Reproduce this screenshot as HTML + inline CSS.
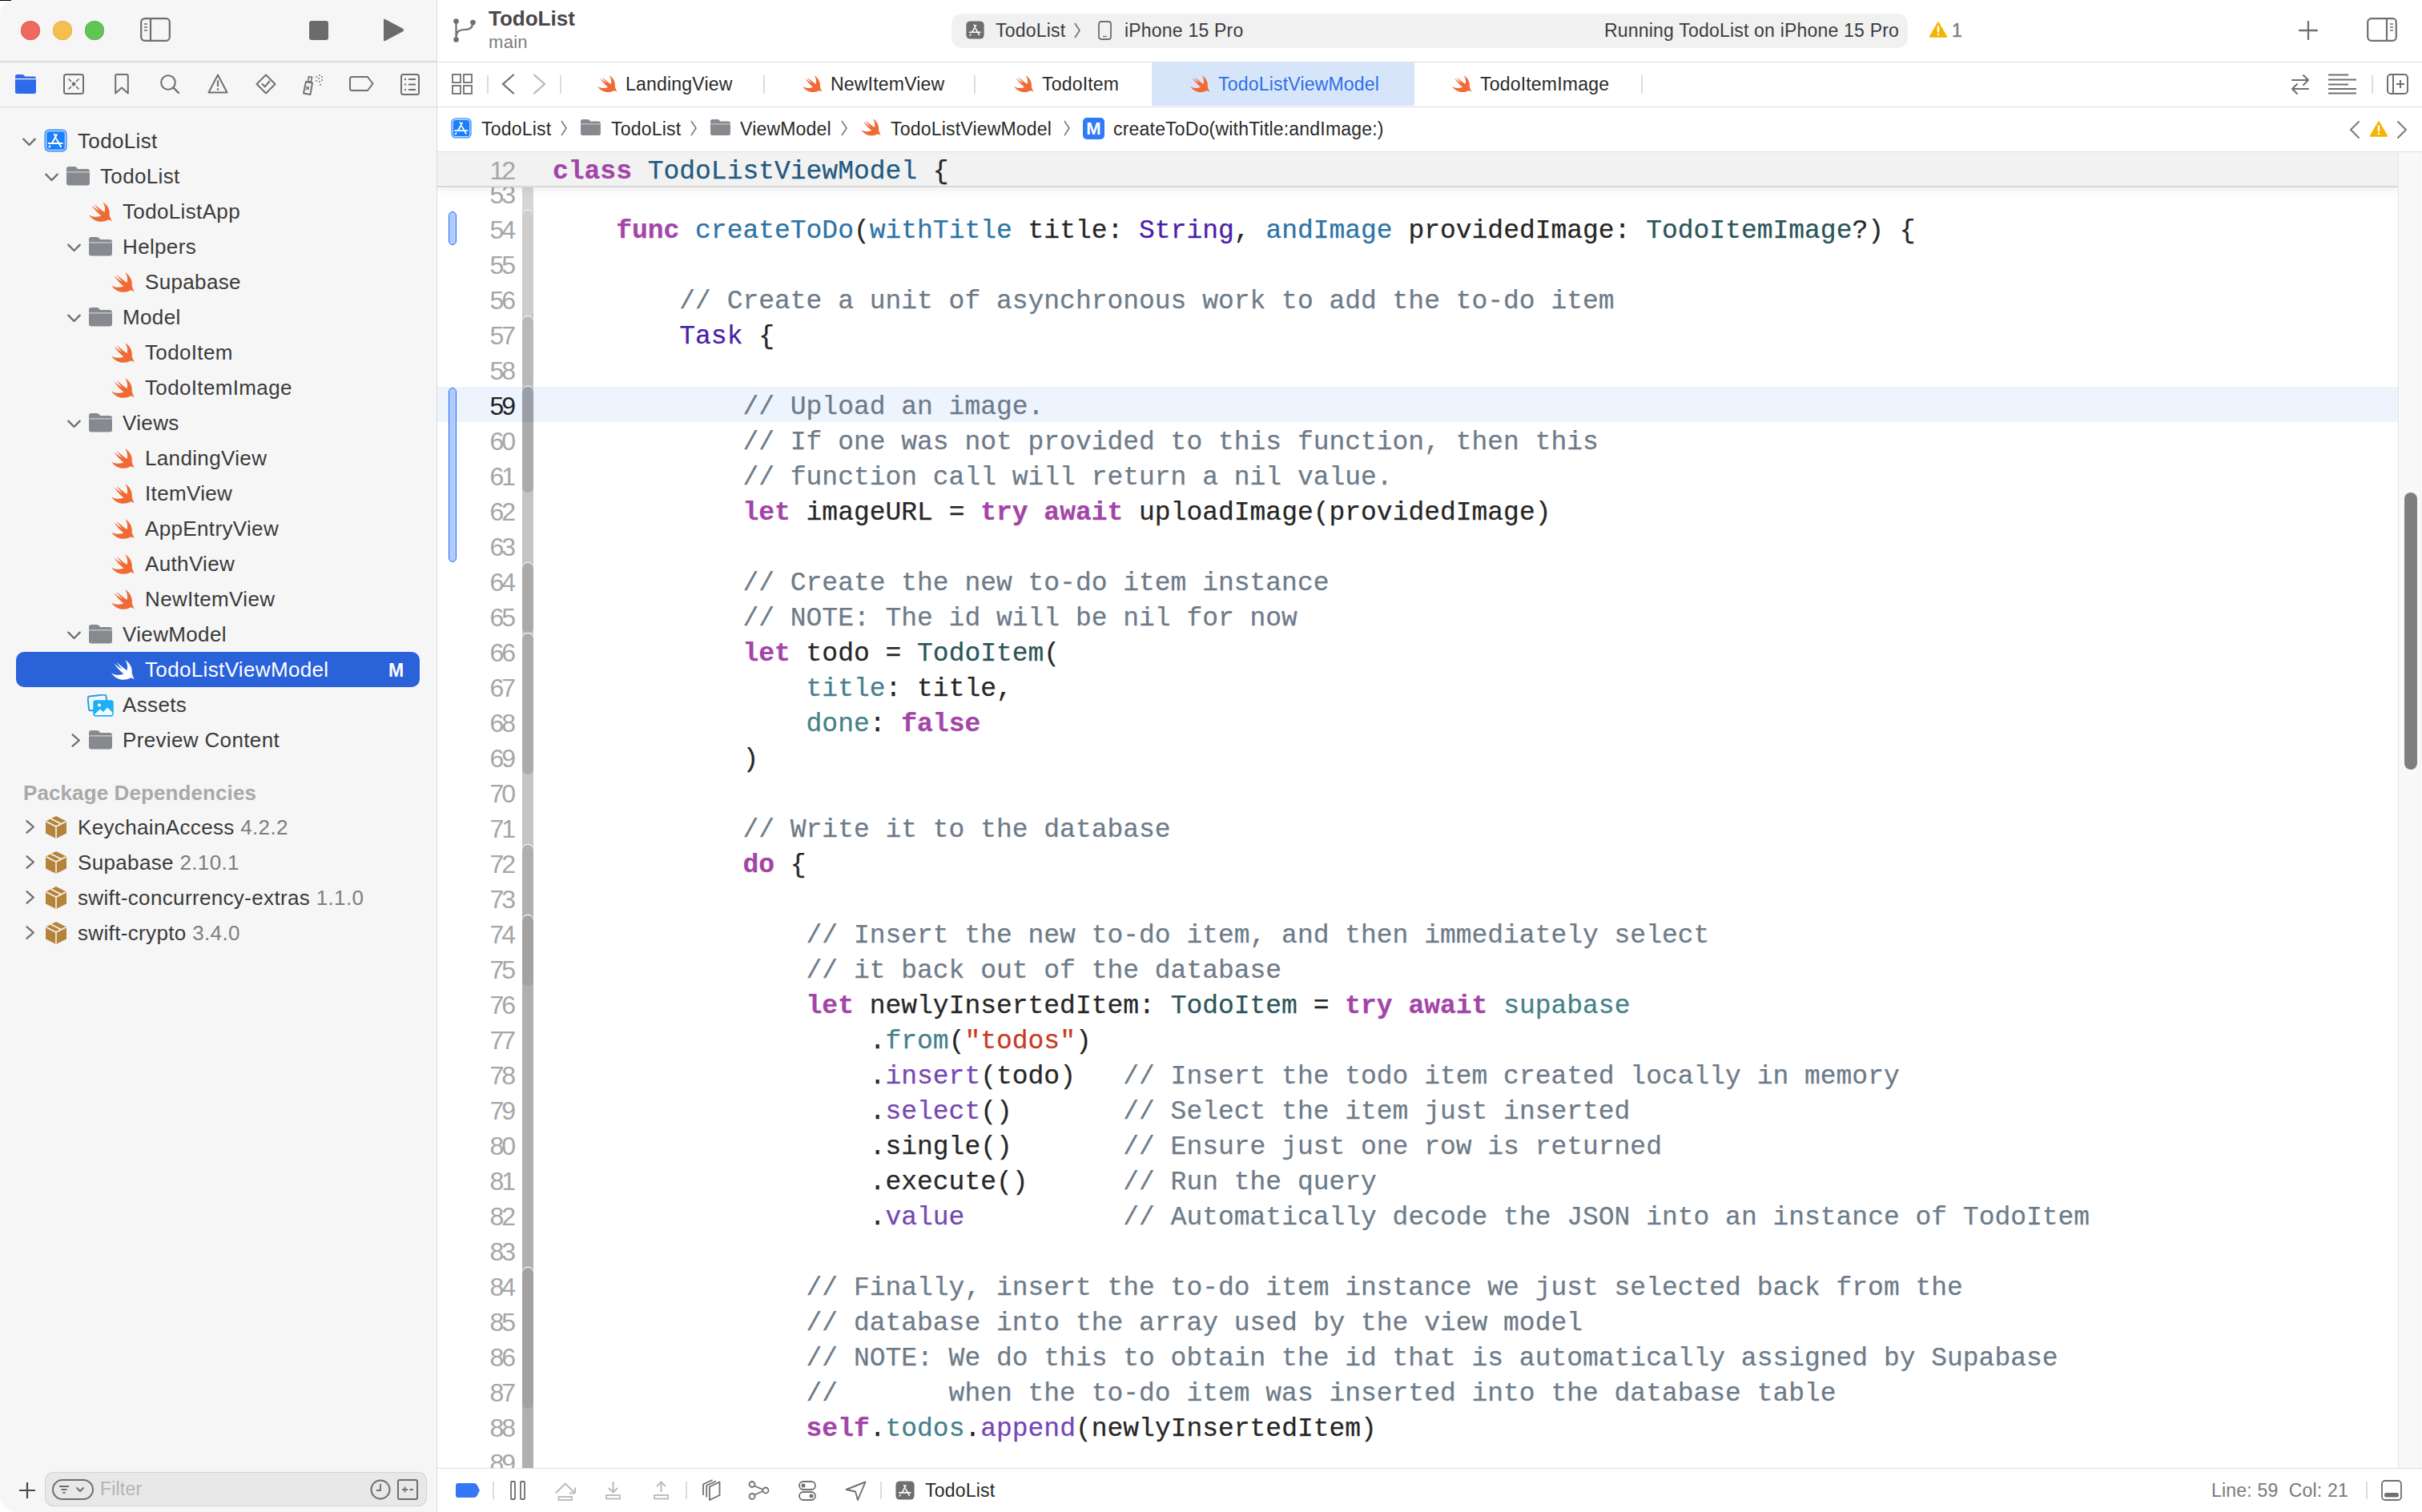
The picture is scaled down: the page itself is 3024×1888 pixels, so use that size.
<!DOCTYPE html><html><head><meta charset="utf-8"><style>html,body{margin:0;padding:0}body{width:3024px;height:1888px;position:relative;overflow:hidden;background:#fff;font-family:"Liberation Sans",sans-serif}.row{position:absolute;left:0;height:44px;width:545px}.t{position:absolute;font-size:26px;line-height:44px;color:#3a3a3a;letter-spacing:0.35px;white-space:pre;top:0}.ln{position:absolute;left:560px;width:81px;text-align:right;font-size:32px;line-height:44px;color:#A6A6A6;letter-spacing:-3px}.cl{position:absolute;left:690px;font-family:"Liberation Mono",monospace;font-size:32.98px;-webkit-text-stroke:0.25px currentColor;line-height:44px;color:#262626;white-space:pre}.k{color:#A345A8;font-weight:bold}.c{color:#6D7B89}.ty{color:#2A5559}.td{color:#22597F}.fd{color:#2D74A6}.sy{color:#4A20A8}.sf{color:#7647B3}.pp{color:#44808A}.st{color:#C73B24}</style></head><body><div style="position:absolute;left:0;top:0;width:545px;height:1888px;background:#F6F6F6;border-right:1px solid #DCDCDC;border-bottom-left-radius:22px;border-top-left-radius:18px;overflow:hidden"><div style="position:absolute;left:26px;top:26px;width:24px;height:24px;border-radius:50%;background:#EC6A5E;box-shadow:inset 0 0 0 0.5px #D0564B"></div><div style="position:absolute;left:66px;top:26px;width:24px;height:24px;border-radius:50%;background:#F4BF4F;box-shadow:inset 0 0 0 0.5px #D6A243"></div><div style="position:absolute;left:106px;top:26px;width:24px;height:24px;border-radius:50%;background:#61C554;box-shadow:inset 0 0 0 0.5px #52A842"></div><svg style="position:absolute;left:175px;top:22px" width="38" height="30" viewBox="0 0 38 30"><rect x="1.2" y="1.2" width="35.6" height="27.6" rx="4.5" fill="none" stroke="#6E6E6E" stroke-width="2.2"/><line x1="13" y1="1.5" x2="13" y2="28.5" stroke="#6E6E6E" stroke-width="2.2"/><path d="M5,8 H9 M5,12 H9 M5,16 H9" stroke="#6E6E6E" stroke-width="1.6"/></svg><div style="position:absolute;left:386px;top:26px;width:24px;height:24px;border-radius:3px;background:#6B6B6B"></div><svg style="position:absolute;left:478px;top:23px" width="27" height="29" viewBox="0 0 27 29"><path d="M1,2 Q1,0 3,1 L25.5,13 Q27,14.5 25.5,16 L3,28 Q1,29 1,27 Z" fill="#6B6B6B"/></svg><div style="position:absolute;left:0;top:76px;width:545px;height:1.5px;background:#DADADA"></div><div style="position:absolute;left:0;top:132.5px;width:545px;height:1.5px;background:#DADADA"></div><svg style="position:absolute;left:19px;top:93px" width="26" height="24" viewBox="0 0 26 24"><path fill="#2F6BE8" d="M2.5,0 H9 Q10.5,0 11.5,1.5 L12,2.5 H23.5 Q26,2.5 26,5 V21.5 Q26,24 23.5,24 H2.5 Q0,24 0,21.5 V2.5 Q0,0 2.5,0 Z"/><rect x="0" y="5" width="26" height="1.2" fill="#F6F6F6"/></svg><svg style="position:absolute;left:79px;top:92px" width="26" height="26" viewBox="0 0 26 26"><rect x="1" y="1" width="24" height="24" rx="2.5" fill="none" stroke="#707070" stroke-width="2"/><circle cx="13" cy="13" r="2.4" fill="#707070"/><path d="M6.5,6.5 L10,10 M19.5,6.5 L16,10 M6.5,19.5 L10,16 M19.5,19.5 L16,16" stroke="#707070" stroke-width="1.7"/></svg><svg style="position:absolute;left:143px;top:92px" width="18" height="26" viewBox="0 0 18 26"><path d="M1.2,2.5 Q1.2,1 2.7,1 H15.3 Q16.8,1 16.8,2.5 V24.5 L9,17.5 L1.2,24.5 Z" fill="none" stroke="#707070" stroke-width="2" stroke-linejoin="round"/></svg><svg style="position:absolute;left:199px;top:92px" width="26" height="26" viewBox="0 0 26 26"><circle cx="11" cy="11" r="8.8" fill="none" stroke="#707070" stroke-width="2.1"/><path d="M17.5,17.5 L24,24" stroke="#707070" stroke-width="2.4" stroke-linecap="round"/></svg><svg style="position:absolute;left:259px;top:92px" width="26" height="25" viewBox="0 0 26 25"><path d="M13,1.5 L24.5,23.5 H1.5 Z" fill="none" stroke="#707070" stroke-width="2" stroke-linejoin="round"/><path d="M13,8.5 V16" stroke="#707070" stroke-width="2.2"/><circle cx="13" cy="19.5" r="1.3" fill="#707070"/></svg><svg style="position:absolute;left:319px;top:92px" width="26" height="26" viewBox="0 0 26 26"><path d="M13,1.5 L24.5,13 L13,24.5 L1.5,13 Z" fill="none" stroke="#707070" stroke-width="2" stroke-linejoin="round"/><path d="M8.5,13 L11.8,16.2 L17.5,9.5" fill="none" stroke="#707070" stroke-width="2" stroke-linecap="round"/></svg><svg style="position:absolute;left:377px;top:92px" width="30" height="27" viewBox="0 0 30 27"><path d="M5,10 L13,11.5 L10.5,26 L2,24.5 Z" fill="none" stroke="#707070" stroke-width="1.9" stroke-linejoin="round"/><rect x="8" y="4" width="4" height="6" fill="none" stroke="#707070" stroke-width="1.6" transform="rotate(10 10 7)"/><path d="M5,16 L9,20 M9,16 L5,20" stroke="#707070" stroke-width="1.5"/><g fill="#707070"><circle cx="18" cy="4" r="0.9"/><circle cx="22" cy="2" r="0.9"/><circle cx="21" cy="6" r="0.9"/><circle cx="25" cy="4" r="0.9"/><circle cx="18" cy="9" r="0.9"/><circle cx="22" cy="10" r="0.9"/><circle cx="25" cy="8" r="0.9"/><circle cx="23" cy="14" r="0.9"/></g></svg><svg style="position:absolute;left:436px;top:95px" width="31" height="19" viewBox="0 0 31 19"><path d="M3.5,1 H23 L29.5,9.5 L23,18 H3.5 Q1,18 1,15.5 V3.5 Q1,1 3.5,1 Z" fill="none" stroke="#707070" stroke-width="2" stroke-linejoin="round"/></svg><svg style="position:absolute;left:500px;top:92px" width="24" height="27" viewBox="0 0 24 27"><rect x="1" y="1" width="22" height="25" rx="2.5" fill="none" stroke="#707070" stroke-width="2"/><path d="M5,7 H7 M10,7 H19 M5,13.5 H7 M10,13.5 H19 M5,20 H7 M10,20 H19" stroke="#707070" stroke-width="1.8"/></svg><div class="row" style="top:154px"><svg style="position:absolute;left:27.5px;top:17.5px" width="17" height="11" viewBox="0 0 17 11"><path d="M1.3,1.6 L8.5,9 L15.7,1.6" fill="none" stroke="#6E6E6E" stroke-width="2.3" stroke-linecap="round" stroke-linejoin="round"/></svg><svg style="position:absolute;left:55px;top:7px" width="29" height="29" viewBox="0 0 29 29"><rect x="0.5" y="0.5" width="28" height="28" rx="6" fill="#1A7FFB"/><rect x="2.5" y="2.5" width="24" height="24" rx="4" fill="none" stroke="#C2DAFB" stroke-width="1.5"/><path d="M15.8,7.2 L10.4,17 M12.8,6.6 L14.6,9.2 M15.3,12.2 L21,22.2 M5.6,18 H22.8 M7.4,21.2 L6.4,22.8" stroke="#fff" stroke-width="1.9" stroke-linecap="round" fill="none"/></svg><div class="t" style="left:97px;color:#3a3a3a">TodoList</div></div><div class="row" style="top:198px"><svg style="position:absolute;left:55.5px;top:17.5px" width="17" height="11" viewBox="0 0 17 11"><path d="M1.3,1.6 L8.5,9 L15.7,1.6" fill="none" stroke="#6E6E6E" stroke-width="2.3" stroke-linecap="round" stroke-linejoin="round"/></svg><svg style="position:absolute;left:83px;top:10px" width="29.0" height="23.5" viewBox="0 0 29 23.5"><path fill="#868A8F" d="M3,0 H10 Q12,0 13,1.5 L14,3 H26 Q29,3 29,6 V20.5 Q29,23.5 26,23.5 H3 Q0,23.5 0,20.5 V3 Q0,0 3,0 Z"/><rect x="0" y="6.2" width="29" height="1.3" fill="#F6F6F6" opacity="0.6"/></svg><div class="t" style="left:125px;color:#3a3a3a">TodoList</div></div><div class="row" style="top:242px"><svg style="position:absolute;left:111px;top:9.5px" width="28.6" height="25.0" viewBox="0 0 28.6 25"><path fill="#F06A35" d="M17.3,0.2 C22.5,3.2 26.8,9.5 25.6,16.8 L28.6,24.6 C27.2,23.4 25.6,22.4 23.8,22.6 C19.5,25.2 12,26 6.5,22.5 C3.8,20.8 1.6,18.6 0,16.2 C4.5,19.2 10,19.6 15.4,17.4 C11.2,14.2 6.5,9 3.3,4.2 C6.8,7.2 10.2,9.8 13.8,11.8 C11.2,9.2 8.6,6 6.6,2.7 C10.5,6.2 15,10 19.5,12.9 C20.8,8.6 19.8,3.6 17.3,0.2 Z"/></svg><div class="t" style="left:153px;color:#3a3a3a">TodoListApp</div></div><div class="row" style="top:286px"><svg style="position:absolute;left:83.5px;top:17.5px" width="17" height="11" viewBox="0 0 17 11"><path d="M1.3,1.6 L8.5,9 L15.7,1.6" fill="none" stroke="#6E6E6E" stroke-width="2.3" stroke-linecap="round" stroke-linejoin="round"/></svg><svg style="position:absolute;left:111px;top:10px" width="29.0" height="23.5" viewBox="0 0 29 23.5"><path fill="#868A8F" d="M3,0 H10 Q12,0 13,1.5 L14,3 H26 Q29,3 29,6 V20.5 Q29,23.5 26,23.5 H3 Q0,23.5 0,20.5 V3 Q0,0 3,0 Z"/><rect x="0" y="6.2" width="29" height="1.3" fill="#F6F6F6" opacity="0.6"/></svg><div class="t" style="left:153px;color:#3a3a3a">Helpers</div></div><div class="row" style="top:330px"><svg style="position:absolute;left:139px;top:9.5px" width="28.6" height="25.0" viewBox="0 0 28.6 25"><path fill="#F06A35" d="M17.3,0.2 C22.5,3.2 26.8,9.5 25.6,16.8 L28.6,24.6 C27.2,23.4 25.6,22.4 23.8,22.6 C19.5,25.2 12,26 6.5,22.5 C3.8,20.8 1.6,18.6 0,16.2 C4.5,19.2 10,19.6 15.4,17.4 C11.2,14.2 6.5,9 3.3,4.2 C6.8,7.2 10.2,9.8 13.8,11.8 C11.2,9.2 8.6,6 6.6,2.7 C10.5,6.2 15,10 19.5,12.9 C20.8,8.6 19.8,3.6 17.3,0.2 Z"/></svg><div class="t" style="left:181px;color:#3a3a3a">Supabase</div></div><div class="row" style="top:374px"><svg style="position:absolute;left:83.5px;top:17.5px" width="17" height="11" viewBox="0 0 17 11"><path d="M1.3,1.6 L8.5,9 L15.7,1.6" fill="none" stroke="#6E6E6E" stroke-width="2.3" stroke-linecap="round" stroke-linejoin="round"/></svg><svg style="position:absolute;left:111px;top:10px" width="29.0" height="23.5" viewBox="0 0 29 23.5"><path fill="#868A8F" d="M3,0 H10 Q12,0 13,1.5 L14,3 H26 Q29,3 29,6 V20.5 Q29,23.5 26,23.5 H3 Q0,23.5 0,20.5 V3 Q0,0 3,0 Z"/><rect x="0" y="6.2" width="29" height="1.3" fill="#F6F6F6" opacity="0.6"/></svg><div class="t" style="left:153px;color:#3a3a3a">Model</div></div><div class="row" style="top:418px"><svg style="position:absolute;left:139px;top:9.5px" width="28.6" height="25.0" viewBox="0 0 28.6 25"><path fill="#F06A35" d="M17.3,0.2 C22.5,3.2 26.8,9.5 25.6,16.8 L28.6,24.6 C27.2,23.4 25.6,22.4 23.8,22.6 C19.5,25.2 12,26 6.5,22.5 C3.8,20.8 1.6,18.6 0,16.2 C4.5,19.2 10,19.6 15.4,17.4 C11.2,14.2 6.5,9 3.3,4.2 C6.8,7.2 10.2,9.8 13.8,11.8 C11.2,9.2 8.6,6 6.6,2.7 C10.5,6.2 15,10 19.5,12.9 C20.8,8.6 19.8,3.6 17.3,0.2 Z"/></svg><div class="t" style="left:181px;color:#3a3a3a">TodoItem</div></div><div class="row" style="top:462px"><svg style="position:absolute;left:139px;top:9.5px" width="28.6" height="25.0" viewBox="0 0 28.6 25"><path fill="#F06A35" d="M17.3,0.2 C22.5,3.2 26.8,9.5 25.6,16.8 L28.6,24.6 C27.2,23.4 25.6,22.4 23.8,22.6 C19.5,25.2 12,26 6.5,22.5 C3.8,20.8 1.6,18.6 0,16.2 C4.5,19.2 10,19.6 15.4,17.4 C11.2,14.2 6.5,9 3.3,4.2 C6.8,7.2 10.2,9.8 13.8,11.8 C11.2,9.2 8.6,6 6.6,2.7 C10.5,6.2 15,10 19.5,12.9 C20.8,8.6 19.8,3.6 17.3,0.2 Z"/></svg><div class="t" style="left:181px;color:#3a3a3a">TodoItemImage</div></div><div class="row" style="top:506px"><svg style="position:absolute;left:83.5px;top:17.5px" width="17" height="11" viewBox="0 0 17 11"><path d="M1.3,1.6 L8.5,9 L15.7,1.6" fill="none" stroke="#6E6E6E" stroke-width="2.3" stroke-linecap="round" stroke-linejoin="round"/></svg><svg style="position:absolute;left:111px;top:10px" width="29.0" height="23.5" viewBox="0 0 29 23.5"><path fill="#868A8F" d="M3,0 H10 Q12,0 13,1.5 L14,3 H26 Q29,3 29,6 V20.5 Q29,23.5 26,23.5 H3 Q0,23.5 0,20.5 V3 Q0,0 3,0 Z"/><rect x="0" y="6.2" width="29" height="1.3" fill="#F6F6F6" opacity="0.6"/></svg><div class="t" style="left:153px;color:#3a3a3a">Views</div></div><div class="row" style="top:550px"><svg style="position:absolute;left:139px;top:9.5px" width="28.6" height="25.0" viewBox="0 0 28.6 25"><path fill="#F06A35" d="M17.3,0.2 C22.5,3.2 26.8,9.5 25.6,16.8 L28.6,24.6 C27.2,23.4 25.6,22.4 23.8,22.6 C19.5,25.2 12,26 6.5,22.5 C3.8,20.8 1.6,18.6 0,16.2 C4.5,19.2 10,19.6 15.4,17.4 C11.2,14.2 6.5,9 3.3,4.2 C6.8,7.2 10.2,9.8 13.8,11.8 C11.2,9.2 8.6,6 6.6,2.7 C10.5,6.2 15,10 19.5,12.9 C20.8,8.6 19.8,3.6 17.3,0.2 Z"/></svg><div class="t" style="left:181px;color:#3a3a3a">LandingView</div></div><div class="row" style="top:594px"><svg style="position:absolute;left:139px;top:9.5px" width="28.6" height="25.0" viewBox="0 0 28.6 25"><path fill="#F06A35" d="M17.3,0.2 C22.5,3.2 26.8,9.5 25.6,16.8 L28.6,24.6 C27.2,23.4 25.6,22.4 23.8,22.6 C19.5,25.2 12,26 6.5,22.5 C3.8,20.8 1.6,18.6 0,16.2 C4.5,19.2 10,19.6 15.4,17.4 C11.2,14.2 6.5,9 3.3,4.2 C6.8,7.2 10.2,9.8 13.8,11.8 C11.2,9.2 8.6,6 6.6,2.7 C10.5,6.2 15,10 19.5,12.9 C20.8,8.6 19.8,3.6 17.3,0.2 Z"/></svg><div class="t" style="left:181px;color:#3a3a3a">ItemView</div></div><div class="row" style="top:638px"><svg style="position:absolute;left:139px;top:9.5px" width="28.6" height="25.0" viewBox="0 0 28.6 25"><path fill="#F06A35" d="M17.3,0.2 C22.5,3.2 26.8,9.5 25.6,16.8 L28.6,24.6 C27.2,23.4 25.6,22.4 23.8,22.6 C19.5,25.2 12,26 6.5,22.5 C3.8,20.8 1.6,18.6 0,16.2 C4.5,19.2 10,19.6 15.4,17.4 C11.2,14.2 6.5,9 3.3,4.2 C6.8,7.2 10.2,9.8 13.8,11.8 C11.2,9.2 8.6,6 6.6,2.7 C10.5,6.2 15,10 19.5,12.9 C20.8,8.6 19.8,3.6 17.3,0.2 Z"/></svg><div class="t" style="left:181px;color:#3a3a3a">AppEntryView</div></div><div class="row" style="top:682px"><svg style="position:absolute;left:139px;top:9.5px" width="28.6" height="25.0" viewBox="0 0 28.6 25"><path fill="#F06A35" d="M17.3,0.2 C22.5,3.2 26.8,9.5 25.6,16.8 L28.6,24.6 C27.2,23.4 25.6,22.4 23.8,22.6 C19.5,25.2 12,26 6.5,22.5 C3.8,20.8 1.6,18.6 0,16.2 C4.5,19.2 10,19.6 15.4,17.4 C11.2,14.2 6.5,9 3.3,4.2 C6.8,7.2 10.2,9.8 13.8,11.8 C11.2,9.2 8.6,6 6.6,2.7 C10.5,6.2 15,10 19.5,12.9 C20.8,8.6 19.8,3.6 17.3,0.2 Z"/></svg><div class="t" style="left:181px;color:#3a3a3a">AuthView</div></div><div class="row" style="top:726px"><svg style="position:absolute;left:139px;top:9.5px" width="28.6" height="25.0" viewBox="0 0 28.6 25"><path fill="#F06A35" d="M17.3,0.2 C22.5,3.2 26.8,9.5 25.6,16.8 L28.6,24.6 C27.2,23.4 25.6,22.4 23.8,22.6 C19.5,25.2 12,26 6.5,22.5 C3.8,20.8 1.6,18.6 0,16.2 C4.5,19.2 10,19.6 15.4,17.4 C11.2,14.2 6.5,9 3.3,4.2 C6.8,7.2 10.2,9.8 13.8,11.8 C11.2,9.2 8.6,6 6.6,2.7 C10.5,6.2 15,10 19.5,12.9 C20.8,8.6 19.8,3.6 17.3,0.2 Z"/></svg><div class="t" style="left:181px;color:#3a3a3a">NewItemView</div></div><div class="row" style="top:770px"><svg style="position:absolute;left:83.5px;top:17.5px" width="17" height="11" viewBox="0 0 17 11"><path d="M1.3,1.6 L8.5,9 L15.7,1.6" fill="none" stroke="#6E6E6E" stroke-width="2.3" stroke-linecap="round" stroke-linejoin="round"/></svg><svg style="position:absolute;left:111px;top:10px" width="29.0" height="23.5" viewBox="0 0 29 23.5"><path fill="#868A8F" d="M3,0 H10 Q12,0 13,1.5 L14,3 H26 Q29,3 29,6 V20.5 Q29,23.5 26,23.5 H3 Q0,23.5 0,20.5 V3 Q0,0 3,0 Z"/><rect x="0" y="6.2" width="29" height="1.3" fill="#F6F6F6" opacity="0.6"/></svg><div class="t" style="left:153px;color:#3a3a3a">ViewModel</div></div><div class="row" style="top:814px"><div style="position:absolute;left:20px;top:0;width:504px;height:44px;border-radius:10px;background:#2A62D9"></div><svg style="position:absolute;left:139px;top:9.5px" width="28.6" height="25.0" viewBox="0 0 28.6 25"><path fill="#fff" d="M17.3,0.2 C22.5,3.2 26.8,9.5 25.6,16.8 L28.6,24.6 C27.2,23.4 25.6,22.4 23.8,22.6 C19.5,25.2 12,26 6.5,22.5 C3.8,20.8 1.6,18.6 0,16.2 C4.5,19.2 10,19.6 15.4,17.4 C11.2,14.2 6.5,9 3.3,4.2 C6.8,7.2 10.2,9.8 13.8,11.8 C11.2,9.2 8.6,6 6.6,2.7 C10.5,6.2 15,10 19.5,12.9 C20.8,8.6 19.8,3.6 17.3,0.2 Z"/></svg><div class="t" style="left:181px;color:#fff">TodoListViewModel</div><div class="t" style="left:485px;color:#fff;font-weight:bold;font-size:23px;top:1px">M</div></div><div class="row" style="top:858px"><svg style="position:absolute;left:109px;top:9px" width="33" height="28" viewBox="0 0 33 28"><rect x="1.2" y="1.5" width="23" height="18" rx="2.5" transform="rotate(-6 12 10)" fill="none" stroke="#1DA1F2" stroke-width="2"/><rect x="8" y="8" width="24" height="19" rx="2.5" fill="#1DB0F6"/><circle cx="15" cy="13.5" r="2" fill="#fff"/><path d="M9,25 L16,18.5 L20,22 L25,16.5 L32,23 V26 H9 Z" fill="#fff" opacity="0.95"/><rect x="8" y="8" width="24" height="19" rx="2.5" fill="none" stroke="#1DB0F6" stroke-width="1.5"/></svg><div class="t" style="left:153px;color:#3a3a3a">Assets</div></div><div class="row" style="top:902px"><svg style="position:absolute;left:88.5px;top:13.5px" width="12" height="17" viewBox="0 0 12 17"><path d="M1.6,1.3 L9.8,8.5 L1.6,15.7" fill="none" stroke="#6E6E6E" stroke-width="2.3" stroke-linecap="round" stroke-linejoin="round"/></svg><svg style="position:absolute;left:111px;top:10px" width="29.0" height="23.5" viewBox="0 0 29 23.5"><path fill="#868A8F" d="M3,0 H10 Q12,0 13,1.5 L14,3 H26 Q29,3 29,6 V20.5 Q29,23.5 26,23.5 H3 Q0,23.5 0,20.5 V3 Q0,0 3,0 Z"/><rect x="0" y="6.2" width="29" height="1.3" fill="#F6F6F6" opacity="0.6"/></svg><div class="t" style="left:153px;color:#3a3a3a">Preview Content</div></div><div style="position:absolute;left:29px;top:977px;font:bold 26px/26px 'Liberation Sans', sans-serif;color:#A9A9A9;letter-spacing:0.1px;white-space:pre">Package Dependencies</div><div class="row" style="top:1010.5px"><svg style="position:absolute;left:32px;top:13.5px" width="12" height="17" viewBox="0 0 12 17"><path d="M1.6,1.3 L9.8,8.5 L1.6,15.7" fill="none" stroke="#6E6E6E" stroke-width="2.3" stroke-linecap="round" stroke-linejoin="round"/></svg><svg style="position:absolute;left:57px;top:8px" width="26" height="28" viewBox="0 0 26 28"><path fill="#B5833A" d="M13,0 L26,6.5 V21.5 L13,28 L0,21.5 V6.5 Z"/><path d="M0.5,6.8 L13,13 L25.5,6.8 M13,13 V27.5" stroke="#F6F6F6" stroke-width="1.6" fill="none"/><path d="M6.5,3.2 L19.5,9.8" stroke="#F6F6F6" stroke-width="1.6" fill="none"/></svg><div class="t" style="left:97px">KeychainAccess <span style="color:#7E7E7E">4.2.2</span></div></div><div class="row" style="top:1054.5px"><svg style="position:absolute;left:32px;top:13.5px" width="12" height="17" viewBox="0 0 12 17"><path d="M1.6,1.3 L9.8,8.5 L1.6,15.7" fill="none" stroke="#6E6E6E" stroke-width="2.3" stroke-linecap="round" stroke-linejoin="round"/></svg><svg style="position:absolute;left:57px;top:8px" width="26" height="28" viewBox="0 0 26 28"><path fill="#B5833A" d="M13,0 L26,6.5 V21.5 L13,28 L0,21.5 V6.5 Z"/><path d="M0.5,6.8 L13,13 L25.5,6.8 M13,13 V27.5" stroke="#F6F6F6" stroke-width="1.6" fill="none"/><path d="M6.5,3.2 L19.5,9.8" stroke="#F6F6F6" stroke-width="1.6" fill="none"/></svg><div class="t" style="left:97px">Supabase <span style="color:#7E7E7E">2.10.1</span></div></div><div class="row" style="top:1098.5px"><svg style="position:absolute;left:32px;top:13.5px" width="12" height="17" viewBox="0 0 12 17"><path d="M1.6,1.3 L9.8,8.5 L1.6,15.7" fill="none" stroke="#6E6E6E" stroke-width="2.3" stroke-linecap="round" stroke-linejoin="round"/></svg><svg style="position:absolute;left:57px;top:8px" width="26" height="28" viewBox="0 0 26 28"><path fill="#B5833A" d="M13,0 L26,6.5 V21.5 L13,28 L0,21.5 V6.5 Z"/><path d="M0.5,6.8 L13,13 L25.5,6.8 M13,13 V27.5" stroke="#F6F6F6" stroke-width="1.6" fill="none"/><path d="M6.5,3.2 L19.5,9.8" stroke="#F6F6F6" stroke-width="1.6" fill="none"/></svg><div class="t" style="left:97px">swift-concurrency-extras <span style="color:#7E7E7E">1.1.0</span></div></div><div class="row" style="top:1142.5px"><svg style="position:absolute;left:32px;top:13.5px" width="12" height="17" viewBox="0 0 12 17"><path d="M1.6,1.3 L9.8,8.5 L1.6,15.7" fill="none" stroke="#6E6E6E" stroke-width="2.3" stroke-linecap="round" stroke-linejoin="round"/></svg><svg style="position:absolute;left:57px;top:8px" width="26" height="28" viewBox="0 0 26 28"><path fill="#B5833A" d="M13,0 L26,6.5 V21.5 L13,28 L0,21.5 V6.5 Z"/><path d="M0.5,6.8 L13,13 L25.5,6.8 M13,13 V27.5" stroke="#F6F6F6" stroke-width="1.6" fill="none"/><path d="M6.5,3.2 L19.5,9.8" stroke="#F6F6F6" stroke-width="1.6" fill="none"/></svg><div class="t" style="left:97px">swift-crypto <span style="color:#7E7E7E">3.4.0</span></div></div><svg style="position:absolute;left:23px;top:1850px" width="22" height="22" viewBox="0 0 22 22"><path d="M11,1 V21 M1,11 H21" stroke="#4A4A4A" stroke-width="2.2"/></svg><div style="position:absolute;left:56px;top:1838px;width:477px;height:43px;border-radius:11px;background:#E8E8E8;box-shadow:inset 0 0 0 1px #D4D4D4"></div><svg style="position:absolute;left:65px;top:1847px" width="52" height="26" viewBox="0 0 52 26"><rect x="1" y="1" width="50" height="24" rx="12" fill="none" stroke="#6E6E6E" stroke-width="2"/><path d="M9,9 H21 M11.5,13 H18.5 M13.5,17 H16.5" stroke="#6E6E6E" stroke-width="1.8"/><path d="M31,11 L35,15 L39,11" fill="none" stroke="#6E6E6E" stroke-width="2" stroke-linecap="round"/></svg><div style="position:absolute;left:125px;top:1848.13px;font:normal 23px/23px 'Liberation Sans', sans-serif;color:#B4B4B4;letter-spacing:0.2px;white-space:pre">Filter</div><svg style="position:absolute;left:462px;top:1847px" width="26" height="26" viewBox="0 0 26 26"><circle cx="13" cy="13" r="11.5" fill="none" stroke="#6E6E6E" stroke-width="2"/><path d="M13,6 V14 H8" fill="none" stroke="#6E6E6E" stroke-width="1.8"/></svg><svg style="position:absolute;left:496px;top:1847px" width="26" height="26" viewBox="0 0 26 26"><rect x="1" y="1" width="24" height="24" rx="2" fill="none" stroke="#6E6E6E" stroke-width="2"/><path d="M6,13 H13 M9.5,9.5 V16.5 M15.5,13 H20" stroke="#6E6E6E" stroke-width="1.8"/></svg></div><div style="position:absolute;left:0;top:0;width:14px;height:1px;background:#000"></div><svg style="position:absolute;left:565px;top:22px" width="30" height="32" viewBox="0 0 30 32"><circle cx="4.5" cy="4.5" r="3.3" fill="#707070"/><circle cx="4.5" cy="27.5" r="3.3" fill="#707070"/><circle cx="25.5" cy="6" r="3.3" fill="#707070"/><path d="M4.5,4.5 V27.5 M25.5,6 Q25.5,15 15,15 Q4.5,15 4.5,24" fill="none" stroke="#707070" stroke-width="2.2"/></svg><div style="position:absolute;left:610px;top:9.79px;font:bold 26px/26px 'Liberation Sans', sans-serif;color:#484848;letter-spacing:0px;white-space:pre">TodoList</div><div style="position:absolute;left:610px;top:41.87px;font:normal 22px/22px 'Liberation Sans', sans-serif;color:#7C7C7C;letter-spacing:0.3px;white-space:pre">main</div><div style="position:absolute;left:1188px;top:16.5px;width:1194px;height:43px;border-radius:13px;background:#F1F1F1"></div><svg style="position:absolute;left:1206px;top:26px" width="23" height="23" viewBox="0 0 29 29"><rect x="0.5" y="0.5" width="28" height="28" rx="6" fill="#6E6E6E"/><path d="M15.8,7.2 L10.4,17 M12.8,6.6 L14.6,9.2 M15.3,12.2 L21,22.2 M5.6,18 H22.8 M7.4,21.2 L6.4,22.8" stroke="#fff" stroke-width="1.9" stroke-linecap="round" fill="none"/></svg><div style="position:absolute;left:1243px;top:26.73px;font:normal 23px/23px 'Liberation Sans', sans-serif;color:#3c3c3c;letter-spacing:0.2px;white-space:pre">TodoList</div><svg style="position:absolute;left:1340px;top:27px" width="10" height="22" viewBox="0 0 10 22"><path d="M2,2 L8,11 L2,20" fill="none" stroke="#6E6E6E" stroke-width="1.6"/></svg><svg style="position:absolute;left:1371px;top:26px" width="17" height="24" viewBox="0 0 17 24"><rect x="1" y="1" width="15" height="22" rx="3" fill="none" stroke="#6E6E6E" stroke-width="1.8"/><path d="M6,19.5 H11" stroke="#6E6E6E" stroke-width="1.3"/></svg><div style="position:absolute;left:1404px;top:26.73px;font:normal 23px/23px 'Liberation Sans', sans-serif;color:#3c3c3c;letter-spacing:0.2px;white-space:pre">iPhone 15 Pro</div><div style="position:absolute;left:2003px;top:26.73px;font:normal 23px/23px 'Liberation Sans', sans-serif;color:#3c3c3c;letter-spacing:0.2px;white-space:pre">Running TodoList on iPhone 15 Pro</div><svg style="position:absolute;left:2409px;top:27px" width="22" height="20" viewBox="0 0 22 20"><path d="M11,1 L21.5,19 H0.5 Z" fill="#F4B400" stroke="#F4B400" stroke-width="1.5" stroke-linejoin="round"/><path d="M11,6.5 V12.5" stroke="#fff" stroke-width="2.4" stroke-linecap="round"/><circle cx="11" cy="16" r="1.3" fill="#fff"/></svg><div style="position:absolute;left:2437px;top:26.73px;font:normal 23px/23px 'Liberation Sans', sans-serif;color:#808080;letter-spacing:0.2px;white-space:pre;-webkit-text-stroke:0.5px #808080">1</div><svg style="position:absolute;left:2870px;top:26px" width="24" height="24" viewBox="0 0 24 24"><path d="M12,1 V23 M1,12 H23" stroke="#707070" stroke-width="2.3" stroke-linecap="round"/></svg><svg style="position:absolute;left:2955px;top:22px" width="38" height="30" viewBox="0 0 38 30"><rect x="1.2" y="1.2" width="35.6" height="27.6" rx="4.5" fill="none" stroke="#707070" stroke-width="2.2"/><line x1="25" y1="1.5" x2="25" y2="28.5" stroke="#707070" stroke-width="2.2"/><path d="M29,8 H33 M29,12 H33 M29,16 H33" stroke="#707070" stroke-width="1.6"/></svg><div style="position:absolute;left:546px;top:76.5px;width:2478px;height:1.7px;background:#DEDEDE;z-index:5"></div><div style="position:absolute;left:546px;top:132.5px;width:2478px;height:1.7px;background:#DEDEDE;z-index:5"></div><div style="position:absolute;left:546px;top:188.5px;width:2478px;height:1.7px;background:#DEDEDE;z-index:5"></div><svg style="position:absolute;left:564px;top:92px" width="26" height="26" viewBox="0 0 26 26"><rect x="1" y="1" width="10" height="10" fill="none" stroke="#707070" stroke-width="1.8"/><rect x="15" y="1" width="10" height="10" fill="none" stroke="#707070" stroke-width="1.8"/><rect x="1" y="15" width="10" height="10" fill="none" stroke="#707070" stroke-width="1.8"/><rect x="15" y="15" width="10" height="10" fill="none" stroke="#707070" stroke-width="1.8"/></svg><div style="position:absolute;left:608px;top:94px;width:1.5px;height:23px;background:#DCDCDC"></div><svg style="position:absolute;left:625px;top:92px" width="18" height="26" viewBox="0 0 18 26"><path d="M16,1.5 L3,13 L16,24.5" fill="none" stroke="#707070" stroke-width="2.2" stroke-linecap="round"/></svg><svg style="position:absolute;left:665px;top:92px" width="18" height="26" viewBox="0 0 18 26"><path d="M2,1.5 L15,13 L2,24.5" fill="none" stroke="#B8B8B8" stroke-width="2.2" stroke-linecap="round"/></svg><div style="position:absolute;left:699px;top:94px;width:1.5px;height:23px;background:#DCDCDC"></div><div style="position:absolute;left:1438px;top:78px;width:328px;height:54px;background:#D7E5FB"></div><svg style="position:absolute;left:746px;top:94px" width="24.310000000000002" height="21.25" viewBox="0 0 28.6 25"><path fill="#F06A35" d="M17.3,0.2 C22.5,3.2 26.8,9.5 25.6,16.8 L28.6,24.6 C27.2,23.4 25.6,22.4 23.8,22.6 C19.5,25.2 12,26 6.5,22.5 C3.8,20.8 1.6,18.6 0,16.2 C4.5,19.2 10,19.6 15.4,17.4 C11.2,14.2 6.5,9 3.3,4.2 C6.8,7.2 10.2,9.8 13.8,11.8 C11.2,9.2 8.6,6 6.6,2.7 C10.5,6.2 15,10 19.5,12.9 C20.8,8.6 19.8,3.6 17.3,0.2 Z"/></svg><div style="position:absolute;left:781px;top:93.83px;font:normal 23px/23px 'Liberation Sans', sans-serif;color:#2a2a2a;letter-spacing:0.2px;white-space:pre">LandingView</div><div style="position:absolute;left:953px;top:94px;width:1.5px;height:23px;background:#DCDCDC"></div><svg style="position:absolute;left:1002px;top:94px" width="24.310000000000002" height="21.25" viewBox="0 0 28.6 25"><path fill="#F06A35" d="M17.3,0.2 C22.5,3.2 26.8,9.5 25.6,16.8 L28.6,24.6 C27.2,23.4 25.6,22.4 23.8,22.6 C19.5,25.2 12,26 6.5,22.5 C3.8,20.8 1.6,18.6 0,16.2 C4.5,19.2 10,19.6 15.4,17.4 C11.2,14.2 6.5,9 3.3,4.2 C6.8,7.2 10.2,9.8 13.8,11.8 C11.2,9.2 8.6,6 6.6,2.7 C10.5,6.2 15,10 19.5,12.9 C20.8,8.6 19.8,3.6 17.3,0.2 Z"/></svg><div style="position:absolute;left:1037px;top:93.83px;font:normal 23px/23px 'Liberation Sans', sans-serif;color:#2a2a2a;letter-spacing:0.2px;white-space:pre">NewItemView</div><div style="position:absolute;left:1216px;top:94px;width:1.5px;height:23px;background:#DCDCDC"></div><svg style="position:absolute;left:1266px;top:94px" width="24.310000000000002" height="21.25" viewBox="0 0 28.6 25"><path fill="#F06A35" d="M17.3,0.2 C22.5,3.2 26.8,9.5 25.6,16.8 L28.6,24.6 C27.2,23.4 25.6,22.4 23.8,22.6 C19.5,25.2 12,26 6.5,22.5 C3.8,20.8 1.6,18.6 0,16.2 C4.5,19.2 10,19.6 15.4,17.4 C11.2,14.2 6.5,9 3.3,4.2 C6.8,7.2 10.2,9.8 13.8,11.8 C11.2,9.2 8.6,6 6.6,2.7 C10.5,6.2 15,10 19.5,12.9 C20.8,8.6 19.8,3.6 17.3,0.2 Z"/></svg><div style="position:absolute;left:1301px;top:93.83px;font:normal 23px/23px 'Liberation Sans', sans-serif;color:#2a2a2a;letter-spacing:0.2px;white-space:pre">TodoItem</div><svg style="position:absolute;left:1486px;top:94px" width="24.310000000000002" height="21.25" viewBox="0 0 28.6 25"><path fill="#F06A35" d="M17.3,0.2 C22.5,3.2 26.8,9.5 25.6,16.8 L28.6,24.6 C27.2,23.4 25.6,22.4 23.8,22.6 C19.5,25.2 12,26 6.5,22.5 C3.8,20.8 1.6,18.6 0,16.2 C4.5,19.2 10,19.6 15.4,17.4 C11.2,14.2 6.5,9 3.3,4.2 C6.8,7.2 10.2,9.8 13.8,11.8 C11.2,9.2 8.6,6 6.6,2.7 C10.5,6.2 15,10 19.5,12.9 C20.8,8.6 19.8,3.6 17.3,0.2 Z"/></svg><div style="position:absolute;left:1521px;top:93.83px;font:normal 23px/23px 'Liberation Sans', sans-serif;color:#2F6FE4;letter-spacing:0.2px;white-space:pre">TodoListViewModel</div><svg style="position:absolute;left:1813px;top:94px" width="24.310000000000002" height="21.25" viewBox="0 0 28.6 25"><path fill="#F06A35" d="M17.3,0.2 C22.5,3.2 26.8,9.5 25.6,16.8 L28.6,24.6 C27.2,23.4 25.6,22.4 23.8,22.6 C19.5,25.2 12,26 6.5,22.5 C3.8,20.8 1.6,18.6 0,16.2 C4.5,19.2 10,19.6 15.4,17.4 C11.2,14.2 6.5,9 3.3,4.2 C6.8,7.2 10.2,9.8 13.8,11.8 C11.2,9.2 8.6,6 6.6,2.7 C10.5,6.2 15,10 19.5,12.9 C20.8,8.6 19.8,3.6 17.3,0.2 Z"/></svg><div style="position:absolute;left:1848px;top:93.83px;font:normal 23px/23px 'Liberation Sans', sans-serif;color:#2a2a2a;letter-spacing:0.2px;white-space:pre">TodoItemImage</div><div style="position:absolute;left:2049px;top:94px;width:1.5px;height:23px;background:#DCDCDC"></div><svg style="position:absolute;left:2859px;top:92px" width="26" height="26" viewBox="0 0 26 26"><path d="M3,8 H23 M17,2 L23,8 L17,14 M23,19 H3 M9,13 L3,19 L9,25" fill="none" stroke="#707070" stroke-width="2" stroke-linecap="round" stroke-linejoin="round"/></svg><svg style="position:absolute;left:2906px;top:92px" width="37" height="26" viewBox="0 0 37 26"><path d="M1,1.5 H26 M1,7.5 H36 M1,13.5 H26 M1,19 H36 M1,24.5 H36" stroke="#707070" stroke-width="2"/></svg><div style="position:absolute;left:2961px;top:94px;width:1.5px;height:23px;background:#DCDCDC"></div><svg style="position:absolute;left:2980px;top:92px" width="27" height="26" viewBox="0 0 27 26"><rect x="1" y="1" width="25" height="24" rx="4" fill="none" stroke="#707070" stroke-width="2"/><path d="M8,1 V25 M12,13 H22 M17,8 V18" stroke="#707070" stroke-width="2"/></svg><svg style="position:absolute;left:563px;top:147px" width="26" height="26" viewBox="0 0 29 29"><rect x="0.5" y="0.5" width="28" height="28" rx="6" fill="#1A7FFB"/><rect x="2.5" y="2.5" width="24" height="24" rx="4" fill="none" stroke="#C2DAFB" stroke-width="1.5"/><path d="M15.8,7.2 L10.4,17 M12.8,6.6 L14.6,9.2 M15.3,12.2 L21,22.2 M5.6,18 H22.8 M7.4,21.2 L6.4,22.8" stroke="#fff" stroke-width="1.9" stroke-linecap="round" fill="none"/></svg><div style="position:absolute;left:601px;top:149.53px;font:normal 23px/23px 'Liberation Sans', sans-serif;color:#2a2a2a;letter-spacing:0.2px;white-space:pre">TodoList</div><svg style="position:absolute;left:699px;top:149px" width="10" height="22" viewBox="0 0 10 22"><path d="M2,2 L8,11 L2,20" fill="none" stroke="#7a7a7a" stroke-width="1.6"/></svg><svg style="position:absolute;left:725px;top:149px" width="24.94" height="20.21" viewBox="0 0 29 23.5"><path fill="#868A8F" d="M3,0 H10 Q12,0 13,1.5 L14,3 H26 Q29,3 29,6 V20.5 Q29,23.5 26,23.5 H3 Q0,23.5 0,20.5 V3 Q0,0 3,0 Z"/><rect x="0" y="6.2" width="29" height="1.3" fill="#F6F6F6" opacity="0.6"/></svg><div style="position:absolute;left:763px;top:149.53px;font:normal 23px/23px 'Liberation Sans', sans-serif;color:#2a2a2a;letter-spacing:0.2px;white-space:pre">TodoList</div><svg style="position:absolute;left:861px;top:149px" width="10" height="22" viewBox="0 0 10 22"><path d="M2,2 L8,11 L2,20" fill="none" stroke="#7a7a7a" stroke-width="1.6"/></svg><svg style="position:absolute;left:887px;top:149px" width="24.94" height="20.21" viewBox="0 0 29 23.5"><path fill="#868A8F" d="M3,0 H10 Q12,0 13,1.5 L14,3 H26 Q29,3 29,6 V20.5 Q29,23.5 26,23.5 H3 Q0,23.5 0,20.5 V3 Q0,0 3,0 Z"/><rect x="0" y="6.2" width="29" height="1.3" fill="#F6F6F6" opacity="0.6"/></svg><div style="position:absolute;left:924px;top:149.53px;font:normal 23px/23px 'Liberation Sans', sans-serif;color:#2a2a2a;letter-spacing:0.2px;white-space:pre">ViewModel</div><svg style="position:absolute;left:1049px;top:149px" width="10" height="22" viewBox="0 0 10 22"><path d="M2,2 L8,11 L2,20" fill="none" stroke="#7a7a7a" stroke-width="1.6"/></svg><svg style="position:absolute;left:1075px;top:148px" width="24.596" height="21.5" viewBox="0 0 28.6 25"><path fill="#F06A35" d="M17.3,0.2 C22.5,3.2 26.8,9.5 25.6,16.8 L28.6,24.6 C27.2,23.4 25.6,22.4 23.8,22.6 C19.5,25.2 12,26 6.5,22.5 C3.8,20.8 1.6,18.6 0,16.2 C4.5,19.2 10,19.6 15.4,17.4 C11.2,14.2 6.5,9 3.3,4.2 C6.8,7.2 10.2,9.8 13.8,11.8 C11.2,9.2 8.6,6 6.6,2.7 C10.5,6.2 15,10 19.5,12.9 C20.8,8.6 19.8,3.6 17.3,0.2 Z"/></svg><div style="position:absolute;left:1112px;top:149.53px;font:normal 23px/23px 'Liberation Sans', sans-serif;color:#2a2a2a;letter-spacing:0.2px;white-space:pre">TodoListViewModel</div><svg style="position:absolute;left:1327px;top:149px" width="10" height="22" viewBox="0 0 10 22"><path d="M2,2 L8,11 L2,20" fill="none" stroke="#7a7a7a" stroke-width="1.6"/></svg><div style="position:absolute;left:1352px;top:146.5px;width:27px;height:27px;border-radius:5px;background:#2F7BF6;color:#fff;font:bold 22px/27px Liberation Sans,sans-serif;text-align:center">M</div><div style="position:absolute;left:1390px;top:149.53px;font:normal 23px/23px 'Liberation Sans', sans-serif;color:#2a2a2a;letter-spacing:0.2px;white-space:pre">createToDo(withTitle:andImage:)</div><svg style="position:absolute;left:2933px;top:150px" width="14" height="24" viewBox="0 0 14 24"><path d="M12,2 L2,12 L12,22" fill="none" stroke="#7a7a7a" stroke-width="2" stroke-linecap="round"/></svg><svg style="position:absolute;left:2959px;top:151px" width="22" height="20" viewBox="0 0 22 20"><path d="M11,1 L21.5,19 H0.5 Z" fill="#F4B400" stroke="#F4B400" stroke-width="1.5" stroke-linejoin="round"/><path d="M11,6.5 V12.5" stroke="#fff" stroke-width="2.4" stroke-linecap="round"/><circle cx="11" cy="16" r="1.3" fill="#fff"/></svg><svg style="position:absolute;left:2992px;top:150px" width="14" height="24" viewBox="0 0 14 24"><path d="M2,2 L12,12 L2,22" fill="none" stroke="#7a7a7a" stroke-width="2" stroke-linecap="round"/></svg><div style="position:absolute;left:546px;top:189px;width:2448px;height:1644px;overflow:hidden"><div style="position:absolute;left:0;top:294px;width:2448px;height:44px;background:#EDF4FE"></div><div style="position:absolute;left:106px;top:0;width:14px;height:1644px;background:#C4C4C4"></div><div style="position:absolute;left:106px;top:0;width:14px;height:74px;background:#D6D6D6"></div><div style="position:absolute;left:106px;top:74px;width:14px;height:132px;background:#CDCDCD;border-radius:7px 7px 7px 7px;box-shadow:0 -1.5px 0 #EEE"></div><div style="position:absolute;left:106px;top:206px;width:14px;height:88px;background:#B9B9B9;border-radius:7px 7px 7px 7px;box-shadow:0 -1.5px 0 #EEE"></div><div style="position:absolute;left:106px;top:294px;width:14px;height:132px;background:#ABABAB;border-radius:7px 7px 7px 7px;box-shadow:0 -1.5px 0 #EEE"></div><div style="position:absolute;left:106px;top:514px;width:14px;height:88px;background:#AAAAAA;border-radius:7px 7px 7px 7px;box-shadow:0 -1.5px 0 #EEE"></div><div style="position:absolute;left:106px;top:602px;width:14px;height:176px;background:#ABABAB;border-radius:7px 7px 7px 7px;box-shadow:0 -1.5px 0 #EEE"></div><div style="position:absolute;left:106px;top:866px;width:14px;height:792px;background:#AFAFAF;border-radius:7px 7px 7px 7px;box-shadow:0 -1.5px 0 #EEE"></div><div style="position:absolute;left:106px;top:954px;width:14px;height:88px;background:#A2A2A2;border-radius:7px 7px 7px 7px;box-shadow:0 -1.5px 0 #EEE"></div><div style="position:absolute;left:106px;top:1394px;width:14px;height:176px;background:#A2A2A2;border-radius:7px 7px 7px 7px;box-shadow:0 -1.5px 0 #EEE"></div><div style="position:absolute;left:106px;top:294px;width:14px;height:44px;background:rgba(80,100,140,0.18)"></div><div style="position:absolute;left:14px;top:75px;width:8px;height:40px;border-radius:5px;background:#AFCBFF;border:1px solid #2F6BF5"></div><div style="position:absolute;left:14px;top:294.5px;width:8px;height:216.5px;border-radius:5px;background:#AFCBFF;border:1px solid #2F6BF5"></div><div class="ln" style="left:14px;top:31.5px;color:#A6A6A6">53</div><div class="ln" style="left:14px;top:75.5px;color:#A6A6A6">54</div><div class="cl" style="left:144px;top:77.5px">    <span class="k">func</span> <span class="fd">createToDo</span>(<span class="fd">withTitle</span> title: <span class="sy">String</span>, <span class="fd">andImage</span> providedImage: <span class="ty">TodoItemImage</span>?) {</div><div class="ln" style="left:14px;top:119.5px;color:#A6A6A6">55</div><div class="ln" style="left:14px;top:163.5px;color:#A6A6A6">56</div><div class="cl" style="left:144px;top:165.5px">        <span class="c">// Create a unit of asynchronous work to add the to-do item</span></div><div class="ln" style="left:14px;top:207.5px;color:#A6A6A6">57</div><div class="cl" style="left:144px;top:209.5px">        <span class="sy">Task</span> {</div><div class="ln" style="left:14px;top:251.5px;color:#A6A6A6">58</div><div class="ln" style="left:14px;top:295.5px;color:#1F1F1F">59</div><div class="cl" style="left:144px;top:297.5px">            <span class="c">// Upload an image.</span></div><div class="ln" style="left:14px;top:339.5px;color:#A6A6A6">60</div><div class="cl" style="left:144px;top:341.5px">            <span class="c">// If one was not provided to this function, then this</span></div><div class="ln" style="left:14px;top:383.5px;color:#A6A6A6">61</div><div class="cl" style="left:144px;top:385.5px">            <span class="c">// function call will return a nil value.</span></div><div class="ln" style="left:14px;top:427.5px;color:#A6A6A6">62</div><div class="cl" style="left:144px;top:429.5px">            <span class="k">let</span> imageURL = <span class="k">try</span> <span class="k">await</span> uploadImage(providedImage)</div><div class="ln" style="left:14px;top:471.5px;color:#A6A6A6">63</div><div class="ln" style="left:14px;top:515.5px;color:#A6A6A6">64</div><div class="cl" style="left:144px;top:517.5px">            <span class="c">// Create the new to-do item instance</span></div><div class="ln" style="left:14px;top:559.5px;color:#A6A6A6">65</div><div class="cl" style="left:144px;top:561.5px">            <span class="c">// NOTE: The id will be nil for now</span></div><div class="ln" style="left:14px;top:603.5px;color:#A6A6A6">66</div><div class="cl" style="left:144px;top:605.5px">            <span class="k">let</span> todo = <span class="ty">TodoItem</span>(</div><div class="ln" style="left:14px;top:647.5px;color:#A6A6A6">67</div><div class="cl" style="left:144px;top:649.5px">                <span class="pp">title</span>: title,</div><div class="ln" style="left:14px;top:691.5px;color:#A6A6A6">68</div><div class="cl" style="left:144px;top:693.5px">                <span class="pp">done</span>: <span class="k">false</span></div><div class="ln" style="left:14px;top:735.5px;color:#A6A6A6">69</div><div class="cl" style="left:144px;top:737.5px">            )</div><div class="ln" style="left:14px;top:779.5px;color:#A6A6A6">70</div><div class="ln" style="left:14px;top:823.5px;color:#A6A6A6">71</div><div class="cl" style="left:144px;top:825.5px">            <span class="c">// Write it to the database</span></div><div class="ln" style="left:14px;top:867.5px;color:#A6A6A6">72</div><div class="cl" style="left:144px;top:869.5px">            <span class="k">do</span> {</div><div class="ln" style="left:14px;top:911.5px;color:#A6A6A6">73</div><div class="ln" style="left:14px;top:955.5px;color:#A6A6A6">74</div><div class="cl" style="left:144px;top:957.5px">                <span class="c">// Insert the new to-do item, and then immediately select</span></div><div class="ln" style="left:14px;top:999.5px;color:#A6A6A6">75</div><div class="cl" style="left:144px;top:1001.5px">                <span class="c">// it back out of the database</span></div><div class="ln" style="left:14px;top:1043.5px;color:#A6A6A6">76</div><div class="cl" style="left:144px;top:1045.5px">                <span class="k">let</span> newlyInsertedItem: <span class="ty">TodoItem</span> = <span class="k">try</span> <span class="k">await</span> <span class="pp">supabase</span></div><div class="ln" style="left:14px;top:1087.5px;color:#A6A6A6">77</div><div class="cl" style="left:144px;top:1089.5px">                    .<span class="pp">from</span>(<span class="st">&quot;todos&quot;</span>)</div><div class="ln" style="left:14px;top:1131.5px;color:#A6A6A6">78</div><div class="cl" style="left:144px;top:1133.5px">                    .<span class="sf">insert</span>(todo)   <span class="c">// Insert the todo item created locally in memory</span></div><div class="ln" style="left:14px;top:1175.5px;color:#A6A6A6">79</div><div class="cl" style="left:144px;top:1177.5px">                    .<span class="sf">select</span>()       <span class="c">// Select the item just inserted</span></div><div class="ln" style="left:14px;top:1219.5px;color:#A6A6A6">80</div><div class="cl" style="left:144px;top:1221.5px">                    .single()       <span class="c">// Ensure just one row is returned</span></div><div class="ln" style="left:14px;top:1263.5px;color:#A6A6A6">81</div><div class="cl" style="left:144px;top:1265.5px">                    .execute()      <span class="c">// Run the query</span></div><div class="ln" style="left:14px;top:1307.5px;color:#A6A6A6">82</div><div class="cl" style="left:144px;top:1309.5px">                    .<span class="sf">value</span>          <span class="c">// Automatically decode the JSON into an instance of TodoItem</span></div><div class="ln" style="left:14px;top:1351.5px;color:#A6A6A6">83</div><div class="ln" style="left:14px;top:1395.5px;color:#A6A6A6">84</div><div class="cl" style="left:144px;top:1397.5px">                <span class="c">// Finally, insert the to-do item instance we just selected back from the</span></div><div class="ln" style="left:14px;top:1439.5px;color:#A6A6A6">85</div><div class="cl" style="left:144px;top:1441.5px">                <span class="c">// database into the array used by the view model</span></div><div class="ln" style="left:14px;top:1483.5px;color:#A6A6A6">86</div><div class="cl" style="left:144px;top:1485.5px">                <span class="c">// NOTE: We do this to obtain the id that is automatically assigned by Supabase</span></div><div class="ln" style="left:14px;top:1527.5px;color:#A6A6A6">87</div><div class="cl" style="left:144px;top:1529.5px">                <span class="c">//       when the to-do item was inserted into the database table</span></div><div class="ln" style="left:14px;top:1571.5px;color:#A6A6A6">88</div><div class="cl" style="left:144px;top:1573.5px">                <span class="k">self</span>.<span class="pp">todos</span>.<span class="sf">append</span>(newlyInsertedItem)</div><div class="ln" style="left:14px;top:1615.5px;color:#A6A6A6">89</div><div style="position:absolute;left:0;top:0;width:2448px;height:43px;background:#F2F2F2;border-bottom:2px solid #D8D8D8;box-shadow:0 3px 12px rgba(0,0,0,0.07)"></div><div class="ln" style="left:14px;top:1.5px;color:#A6A6A6">12</div><div class="cl" style="left:144px;top:3.5px"><span class="k">class</span> <span class="td">TodoListViewModel</span> {</div></div><div style="position:absolute;left:2994px;top:189px;width:27px;height:1644px;background:#F9F9F9;border-left:1.5px solid #E4E4E4;border-right:1.5px solid #EDEDED"></div><div style="position:absolute;left:3002px;top:615px;width:16px;height:346px;border-radius:8px;background:#7F7F7F"></div><div style="position:absolute;left:546px;top:1832.5px;width:2478px;height:1.5px;background:#E0E0E0"></div><svg style="position:absolute;left:569px;top:1852px" width="30" height="18" viewBox="0 0 30 18"><path d="M3,0 H23 Q25,0 26.5,2 L30,9 L26.5,16 Q25,18 23,18 H3 Q0,18 0,15 V3 Q0,0 3,0 Z" fill="#3478F6"/></svg><div style="position:absolute;left:615px;top:1850px;width:1.5px;height:22px;background:#DCDCDC"></div><svg style="position:absolute;left:637px;top:1849px" width="19" height="24" viewBox="0 0 19 24"><rect x="1" y="1" width="5" height="22" rx="1" fill="none" stroke="#707070" stroke-width="1.8"/><rect x="13" y="1" width="5" height="22" rx="1" fill="none" stroke="#707070" stroke-width="1.8"/></svg><svg style="position:absolute;left:693px;top:1849px" width="27" height="25" viewBox="0 0 27 25"><path d="M0.8,15.5 L12.8,3.6 L25,15.5 M25,15.5 V8.5 M25,15.5 H18" fill="none" stroke="#B8B8B8" stroke-width="1.9" stroke-linejoin="round"/><rect x="4.5" y="20" width="16.5" height="4" fill="none" stroke="#B8B8B8" stroke-width="1.8"/></svg><svg style="position:absolute;left:756px;top:1849px" width="19" height="24" viewBox="0 0 19 24"><path d="M9.5,1 V14 M4,9 L9.5,14.5 L15,9" fill="none" stroke="#B8B8B8" stroke-width="1.9"/><rect x="1" y="18" width="17" height="4.5" fill="none" stroke="#B8B8B8" stroke-width="1.8"/></svg><svg style="position:absolute;left:816px;top:1849px" width="19" height="24" viewBox="0 0 19 24"><path d="M9.5,14 V1.5 M4,7 L9.5,1.5 L15,7" fill="none" stroke="#B8B8B8" stroke-width="1.9"/><rect x="1" y="18" width="17" height="4.5" fill="none" stroke="#B8B8B8" stroke-width="1.8"/></svg><div style="position:absolute;left:856px;top:1850px;width:1.5px;height:22px;background:#DCDCDC"></div><svg style="position:absolute;left:876px;top:1847px" width="24" height="28" viewBox="0 0 24 28"><path d="M10,9.5 L22.5,3.5 V20 L10,26 Z M6.2,22.5 V8 L18,2.5 M2,20 V6.5 L13.5,1" fill="none" stroke="#707070" stroke-width="1.8" stroke-linejoin="round"/></svg><svg style="position:absolute;left:934px;top:1849px" width="27" height="24" viewBox="0 0 27 24"><circle cx="5" cy="4.5" r="3.5" fill="none" stroke="#707070" stroke-width="1.8"/><circle cx="5" cy="19.5" r="3.5" fill="none" stroke="#707070" stroke-width="1.8"/><circle cx="22" cy="12" r="3.5" fill="none" stroke="#707070" stroke-width="1.8"/><path d="M8,6.5 L18.5,11 M8,17.5 L18.5,13" stroke="#707070" stroke-width="1.8"/></svg><svg style="position:absolute;left:997px;top:1849px" width="22" height="25" viewBox="0 0 22 25"><rect x="1" y="1" width="20" height="10" rx="5" fill="none" stroke="#707070" stroke-width="1.8"/><circle cx="6" cy="6" r="2.5" fill="#707070"/><rect x="1" y="14" width="20" height="10" rx="5" fill="none" stroke="#707070" stroke-width="1.8"/><circle cx="16" cy="19" r="2.5" fill="#707070"/></svg><svg style="position:absolute;left:1055px;top:1849px" width="27" height="25" viewBox="0 0 27 25"><path d="M1.5,11 L25.5,1.5 L16,24 L13,13.5 Z" fill="none" stroke="#707070" stroke-width="1.9" stroke-linejoin="round"/></svg><div style="position:absolute;left:1099px;top:1850px;width:1.5px;height:22px;background:#DCDCDC"></div><svg style="position:absolute;left:1118px;top:1849px" width="24" height="24" viewBox="0 0 29 29"><rect x="0.5" y="0.5" width="28" height="28" rx="6" fill="#6E6E6E"/><path d="M15.8,7.2 L10.4,17 M12.8,6.6 L14.6,9.2 M15.3,12.2 L21,22.2 M5.6,18 H22.8 M7.4,21.2 L6.4,22.8" stroke="#fff" stroke-width="1.9" stroke-linecap="round" fill="none"/></svg><div style="position:absolute;left:1155px;top:1850.33px;font:normal 23px/23px 'Liberation Sans', sans-serif;color:#2a2a2a;letter-spacing:0.2px;white-space:pre">TodoList</div><div style="position:absolute;left:2761px;top:1849.73px;font:normal 23px/23px 'Liberation Sans', sans-serif;color:#7A7A7A;letter-spacing:0.2px;white-space:pre">Line: 59  Col: 21</div><div style="position:absolute;left:2954px;top:1850px;width:1.5px;height:22px;background:#DCDCDC"></div><svg style="position:absolute;left:2973px;top:1848px" width="26" height="26" viewBox="0 0 26 26"><rect x="1" y="1" width="24" height="24" rx="4" fill="none" stroke="#707070" stroke-width="1.8"/><rect x="4" y="16" width="18" height="5.5" rx="2.5" fill="#707070"/></svg></body></html>
